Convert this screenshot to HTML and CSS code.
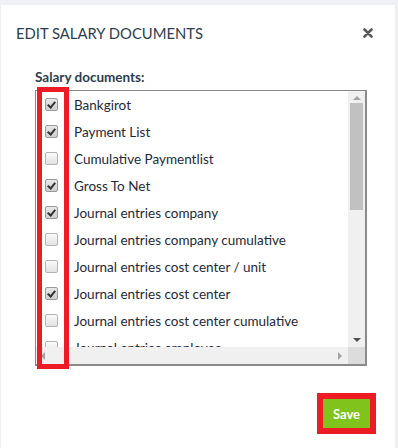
FILE: index.html
```html
<!DOCTYPE html>
<html lang="en">
<head>
  <meta charset="UTF-8">
  <title>Edit salary documents</title>
  <link rel="stylesheet" href="styles.css">
</head>
<body>

  <div class="modal">
    <div class="modal-header">
      <h2>EDIT SALARY DOCUMENTS</h2>
      <svg class="close" width="10" height="10" viewBox="0 0 10 10">
        <path d="M1.5 1.5 L8.5 8.5 M8.5 1.5 L1.5 8.5" stroke="#5a5a5a" stroke-width="2.6" stroke-linecap="round"/>
      </svg>
    </div>

    <div class="modal-body">
      <div class="label">Salary documents:</div>
      <div class="list-box">
        <div class="list-items">
          <label class="item"><span class="check on"></span>Bankgirot</label>
          <label class="item"><span class="check on"></span>Payment List</label>
          <label class="item"><span class="check"></span>Cumulative Paymentlist</label>
          <label class="item"><span class="check on"></span>Gross To Net</label>
          <label class="item"><span class="check on"></span>Journal entries company</label>
          <label class="item"><span class="check"></span>Journal entries company cumulative</label>
          <label class="item"><span class="check"></span>Journal entries cost center / unit</label>
          <label class="item"><span class="check on"></span>Journal entries cost center</label>
          <label class="item"><span class="check"></span>Journal entries cost center cumulative</label>
          <label class="item"><span class="check"></span>Journal entries employee</label>
        </div>
        <div class="vscroll">
          <span class="arrow up"></span>
          <div class="thumb"></div>
          <span class="arrow down"></span>
        </div>
        <div class="hscroll">
          <span class="arrow left"></span>
          <span class="arrow right"></span>
        </div>
        <div class="corner"></div>
        <div class="mark mark-checks"></div>
      </div>
    </div>

    <div class="modal-footer">
      <div class="mark-save">
        <button class="save-button">Save</button>
      </div>
    </div>
  </div>

</body>
</html>
```

FILE: styles.css
```css
body {
  margin: 0;
  font-family: 'Lato', 'Open Sans', sans-serif;
  background-color: #eef0f3;
  height: 448px;
  overflow: hidden;
}

.modal {
  margin: 5px 3px 0 1px;
  background-color: #fff;
  height: 443px;
  box-sizing: border-box;
}

.modal-header {
  display: flex;
  align-items: center;
  justify-content: space-between;
  padding: 11px 22px 0 15px;
  height: 34px;
}

h2 {
  margin: 0;
  font-size: 14.8px;
  font-weight: normal;
  color: #2c3e50;
}

.close {
  display: block;
}

.modal-body {
  padding: 19px 27px 0 34px;
}

.label {
  font-size: 13.5px;
  font-weight: bold;
  color: #2c3e50;
  margin-bottom: 5px;
}

.list-box {
  position: relative;
  border: 2px solid #8a8a8a;
  border-left-width: 1px;
  border-top-width: 1px;
  height: 276px;
  width: 332px;
  box-sizing: border-box;
  display: grid;
  grid-template-columns: 1fr 17px;
  grid-template-rows: 1fr 17px;
}

.list-items {
  overflow: hidden;
}

.item {
  display: flex;
  align-items: center;
  height: 27px;
  font-size: 13.5px;
  color: #1e2a3a;
  white-space: nowrap;
}

.check {
  width: 11px;
  height: 11px;
  border: 1px solid #b4b4b4;
  border-radius: 2px;
  background: linear-gradient(#fafafa, #e2e2e2);
  margin: 0 16px 0 9px;
  position: relative;
  flex-shrink: 0;
}

.check.on {
  border-color: #9a9a9a;
  background: linear-gradient(#e8e8e8, #cfcfcf);
}

.check.on::after {
  content: "";
  position: absolute;
  left: 3px;
  top: 1px;
  width: 3px;
  height: 6px;
  border: solid #333;
  border-width: 0 2px 2px 0;
  transform: rotate(40deg);
}

.vscroll {
  background-color: #f0f0f0;
  display: flex;
  flex-direction: column;
  align-items: center;
}

.thumb {
  width: 13px;
  height: 107px;
  background-color: #c1c1c1;
  margin-top: 3px;
  flex-shrink: 0;
}

.vscroll .down {
  margin-top: auto;
  margin-bottom: 5px;
}

.arrow {
  width: 0;
  height: 0;
  border: 4px solid transparent;
}

.arrow.up {
  border-bottom-color: #a3a3a3;
  border-top-width: 0;
  margin-top: 5px;
}

.arrow.down {
  border-top-color: #505050;
  border-bottom-width: 0;
}

.hscroll {
  background-color: #f0f0f0;
  display: flex;
  align-items: center;
  justify-content: space-between;
  padding: 0 6px 0 5px;
}

.arrow.left {
  border-right-color: #a3a3a3;
  border-left-width: 0;
}

.arrow.right {
  border-left-color: #a3a3a3;
  border-right-width: 0;
}

.corner {
  background-color: #dcdcdc;
}

.mark {
  position: absolute;
  border: 5px solid #ed1c24;
}

.mark-checks {
  left: 1px;
  top: -4px;
  width: 22px;
  height: 272px;
}

.modal-footer {
  display: flex;
  justify-content: flex-end;
  padding: 27px 19px 0 0;
}

.mark-save {
  border: 6px solid #ed1c24;
}

.save-button {
  background-color: #7fc31c;
  border: none;
  color: #fff;
  font-family: inherit;
  font-weight: bold;
  font-size: 13px;
  width: 47px;
  height: 29px;
  display: block;
}
```
